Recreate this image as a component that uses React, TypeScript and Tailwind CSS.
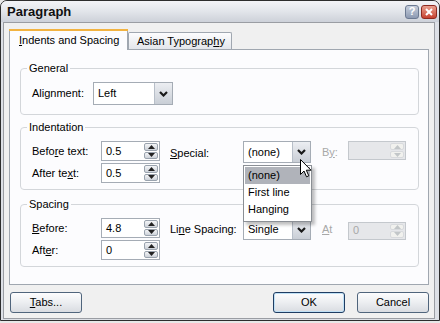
import React from "react";

const Chevron = ({ color = "#1a1a1a" }: { color?: string }) => (
  <svg width="9" height="6" viewBox="0 0 9 6">
    <path d="M1 1 L4.5 4.5 L8 1" fill="none" stroke={color} strokeWidth="2.2" />
  </svg>
);

const Select = ({ value, w, h = 22 }: { value: string; w: number; h?: number }) => (
  <div
    className="flex border border-[#a5acb5] bg-white"
    style={{ width: w, height: h }}
  >
    <div className="flex-1 flex items-center pl-[4px]">{value}</div>
    <div className="w-[18px] h-full flex items-center justify-center border-l border-[#b7bec8] bg-gradient-to-b from-[#eceef2] to-[#c9ced6]">
      <Chevron />
    </div>
  </div>
);

const Tri = ({ up, color }: { up: boolean; color: string }) => (
  <svg width="7" height="4" viewBox="0 0 7 4">
    {up ? <path d="M0 4 L3.5 0 L7 4 Z" fill={color} /> : <path d="M0 0 L3.5 4 L7 0 Z" fill={color} />}
  </svg>
);

const Spin = ({ value, disabled = false, h = 20 }: { value: string; disabled?: boolean; h?: number }) => (
  <div
    className={
      "flex border " +
      (disabled ? "border-[#c4c8cd] bg-[#e6e7ea] w-[58px]" : "border-[#a5acb5] bg-white w-[59px]")
    }
    style={{ height: h }}
  >
    <div className={"flex-1 flex items-center pl-[4px] " + (disabled ? "text-[#a8a8a8]" : "")}>{value}</div>
    <div className="w-[16px] flex flex-col gap-[1px] p-[1px]">
      {[true, false].map((up) => (
        <div
          key={String(up)}
          className={
            "flex-1 flex items-center justify-center rounded-[2px] border " +
            (disabled
              ? "border-[#d8dadd] bg-[#f1f1ee]"
              : "border-[#9aa3ae] bg-gradient-to-b from-[#f4f5f7] to-[#cdd2d9]")
          }
        >
          <Tri up={up} color={disabled ? "#c2c6c8" : "#222"} />
        </div>
      ))}
    </div>
  </div>
);

const U = ({ children }: { children: React.ReactNode }) => <span className="underline underline-offset-[1px]">{children}</span>;

const Group = ({ title, className, children }: { title: string; className?: string; children: React.ReactNode }) => (
  <fieldset className={"border border-[#d3d6da] rounded-[4px] pl-[11px] pr-[10px] " + (className || "")}>
    <legend className="-ml-[5px] px-[2px] leading-[14px]">{title}</legend>
    {children}
  </fieldset>
);

const Button = ({ children, def = false }: { children: React.ReactNode; def?: boolean }) => (
  <div
    className={
      "w-[72px] h-[21px] flex items-center justify-center rounded-[3px] border bg-gradient-to-b from-[#fdfdfe] via-[#eceef1] to-[#d9dce1] " +
      (def ? "border-[#1f3d63] shadow-[inset_0_0_0_1px_#bfe0f5]" : "border-[#50657c]")
    }
  >
    {children}
  </div>
);

const Cursor = () => (
  <svg width="12" height="19" viewBox="0 0 12 19" className="absolute left-[57px] top-[18px] z-30">
    <path d="M0.5 0.5 L0.5 15.5 L4 12 L6.5 17.8 L8.8 16.8 L6.3 11.2 L11 11.2 Z" fill="white" stroke="black" strokeWidth="1" />
  </svg>
);

export default function App() {
  return (
    <div className="w-[440px] h-[323px] bg-[#e8e8e8] font-['Liberation_Sans',Arial,sans-serif] text-[11px] text-black">
      <div className="w-[440px] h-[321px] flex flex-col border border-[#2d2d2d] rounded-t-[7px] overflow-hidden bg-[#dde0e6]">
        {/* title bar */}
        <div className="h-[21px] flex items-center pl-[6px] pr-[2px] bg-gradient-to-b from-[#f3f4f7] via-[#e2e5ea] to-[#cdd1d9]">
          <div className="flex-1 font-bold text-[13px] text-[#101010]">Paragraph</div>
          <div className="flex gap-[2px]">
            <div className="w-[14px] h-[14px] rounded-[3px] border border-[#6c7a92] bg-gradient-to-b from-[#c7cfdc] to-[#8d9ab2] flex items-center justify-center text-white font-bold text-[11px] leading-none">
              ?
            </div>
            <div className="w-[16px] h-[14px] rounded-[3px] border border-[#8e2a20] bg-gradient-to-b from-[#e9a090] to-[#c5402f] flex items-center justify-center">
              <svg width="8" height="8" viewBox="0 0 8 8">
                <path d="M1 1 L7 7 M7 1 L1 7" stroke="white" strokeWidth="2" />
              </svg>
            </div>
          </div>
        </div>
        {/* client */}
        <div className="flex-1 ml-[2px] mr-[4px] mb-[1px] border border-[#9a9da3] bg-[#f0f0f0] px-[5px] pt-[6px] flex flex-col">
          {/* tabs */}
          <div className="h-[20px] flex items-end relative z-10">
            <div className="w-[119px] h-[21px] -mb-[1px] border-x border-[#a0a7b0] bg-[#fcfcfe] flex flex-col">
              <div className="h-[2px] bg-[#f2b341] -mx-px"></div>
              <div className="flex-1 pl-[9px] flex items-center pb-[1px]">
                <U>I</U>ndents and Spacing
              </div>
            </div>
            <div className="w-[104px] h-[17px] border border-b-0 border-[#a0a7b0] rounded-t-[2px] bg-gradient-to-b from-[#fdfdfe] to-[#e3e6eb] pl-[8px] flex items-center">
              Asian Typograp<U>h</U>y
            </div>
          </div>
          {/* panel */}
          <div className="h-[236px] border border-[#a0a7b0] bg-[#fcfcfe] pl-[10px] pr-[9px] pt-[11px] flex flex-col">
            <Group title="General" className="pt-[7px] pb-[9px]">
              <div className="flex items-center h-[23px]">
                <div className="w-[61px]">Alignment:</div>
                <Select value="Left" w={80} h={23} />
              </div>
            </Group>

            <Group title="Indentation" className="mt-[5px] pt-[7px] pb-[6px]">
              <div className="flex items-start">
                <div className="flex flex-col gap-[2px]">
                  <div className="flex items-center">
                    <div className="w-[69px]">Befo<U>r</U>e text:</div>
                    <Spin value="0.5" />
                  </div>
                  <div className="flex items-center">
                    <div className="w-[69px]">After te<U>x</U>t:</div>
                    <Spin value="0.5" />
                  </div>
                </div>
                <div className="flex items-center ml-[10px] h-[22px]">
                  <div className="w-[73px] pt-[2px]"><U>S</U>pecial:</div>
                  <div className="relative">
                    <Select value="(none)" w={68} />
                    <div className="absolute left-0 top-[24px] w-[69px] h-[57px] border border-[#8b8f95] bg-white z-20 p-[1px] shadow-[3px_3px_3px_rgba(0,0,0,0.25)]">
                      <div className="h-[17px] bg-[#b0b3ba] pl-[3px] flex items-center">(none)</div>
                      <div className="h-[17px] pl-[3px] flex items-center">First line</div>
                      <div className="h-[17px] pl-[3px] flex items-center">Hanging</div>
                    </div>
                    <Cursor />
                  </div>
                  <div className="w-[26px] ml-[11px] text-[#a8a8a8]">B<U>y</U>:</div>
                  <div className="self-start">
                    <Spin value="" disabled h={19} />
                  </div>
                </div>
              </div>
            </Group>

            <Group title="Spacing" className="mt-[7px] pt-[7px] pb-[6px]">
              <div className="flex items-start">
                <div className="flex flex-col gap-[2px]">
                  <div className="flex items-center">
                    <div className="w-[69px]"><U>B</U>efore:</div>
                    <Spin value="4.8" />
                  </div>
                  <div className="flex items-center">
                    <div className="w-[69px]">Aft<U>e</U>r:</div>
                    <Spin value="0" />
                  </div>
                </div>
                <div className="flex items-center ml-[10px] mt-[1px] h-[21px]">
                  <div className="w-[73px]">Li<U>n</U>e Spacing:</div>
                  <Select value="Single" w={68} h={21} />
                  <div className="w-[26px] ml-[11px] text-[#a8a8a8]"><U>A</U>t</div>
                  <div className="mt-[2px]">
                    <Spin value="0" disabled h={18} />
                  </div>
                </div>
              </div>
            </Group>
          </div>
          {/* buttons */}
          <div className="mt-[7px] flex pl-[1px] pr-[0px]">
            <Button>
              <span><U>T</U>abs...</span>
            </Button>
            <div className="flex-1"></div>
            <Button def>OK</Button>
            <div className="w-[12px]"></div>
            <Button>Cancel</Button>
          </div>
        </div>
      </div>
    </div>
  );
}
